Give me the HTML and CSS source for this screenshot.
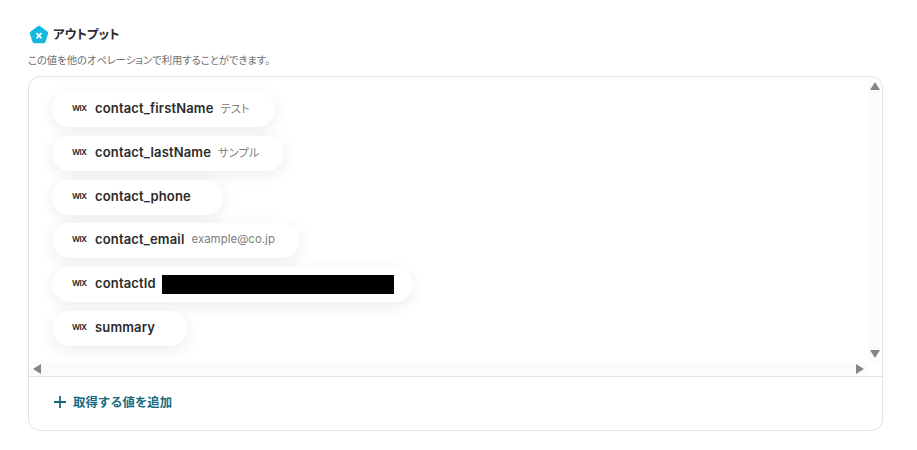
FILE: index.html
```html
<!DOCTYPE html>
<html lang="ja">
<head>
<meta charset="utf-8">
<title>アウトプット</title>
<link rel="stylesheet" href="styles.css">
</head>
<body>
<main class="page">
  <header class="heading">
    <svg class="badge" width="20" height="20" viewBox="0 0 20 20"><path d="M10 .8a2 2 0 0 1 1.200.4l7.200 5.200a2 2 0 0 1 .7 2.300l-2.700 8.200a2 2 0 0 1-1.900 1.400H5.500a2 2 0 0 1-1.900-1.400L.9 8.700a2 2 0 0 1 .7-2.300l7.200-5.200A2 2 0 0 1 10 .8z" fill="#14b8e0"/><path d="M7.500 8.200l5 5.200M12.500 8.200l-5 5.200" stroke="#fff" stroke-width="1.700" fill="none"/></svg>
    <h1 class="title">アウトプット</h1>
  </header>
  <p class="desc">この値を他のオペレーションで利用することができます。</p>
  <section class="card">
    <div class="scroller">
      <div class="list">
        <div class="pill"><span class="wix">WIX</span><span class="name">contact_firstName</span><span class="val jp">テスト</span></div>
        <div class="pill"><span class="wix">WIX</span><span class="name">contact_lastName</span><span class="val jp">サンプル</span></div>
        <div class="pill"><span class="wix">WIX</span><span class="name">contact_phone</span><span class="val"></span></div>
        <div class="pill"><span class="wix">WIX</span><span class="name">contact_email</span><span class="val">example@co.jp</span></div>
        <div class="pill"><span class="wix">WIX</span><span class="name">contactId</span><span class="redact"></span></div>
        <div class="pill"><span class="wix">WIX</span><span class="name">summary</span><span class="val"></span></div>
      </div>
      <div class="vbar">
        <svg width="10" height="8" viewBox="0 0 10 8"><path d="M5 0l5 8H0z" fill="#858585"/></svg>
        <svg width="10" height="8" viewBox="0 0 10 8"><path d="M0 0h10L5 8z" fill="#858585"/></svg>
      </div>
      <div class="hbar">
        <svg width="8" height="10" viewBox="0 0 8 10"><path d="M8 0v10L0 5z" fill="#858585"/></svg>
        <svg width="8" height="10" viewBox="0 0 8 10"><path d="M0 0l8 5-8 5z" fill="#858585"/></svg>
      </div>
    </div>
    <footer class="foot">
      <svg width="12" height="12" viewBox="0 0 12 12"><path d="M6 0v12M0 6h12" stroke="#176b80" stroke-width="1.800"/></svg>
      <span class="add">取得する値を追加</span>
    </footer>
  </section>
</main>
</body>
</html>
```
FILE: styles.css
```css
* { box-sizing: border-box; }
html, body { margin: 0; padding: 0; background: #fff; }
body { width: 917px; height: 450px; overflow: hidden; font-family: "Inter", "Noto Sans CJK JP", sans-serif; color: #2b2b2b; }
.page { padding: 25px 34px 0 28px; }
.heading { display: flex; align-items: center; gap: 4px; height: 20px; margin-left: 1px; }
.badge { flex: none; }
.title { margin: -2px 0 0; font-size: 12.500px; font-weight: 600; line-height: 20px; font-feature-settings: "palt"; color: #2b2b2b; font-family: "Noto Sans CJK JP", sans-serif; }
.desc { margin: 7px 0 0; font-size: 10.300px; line-height: 15px; font-feature-settings: "palt"; color: #6f6f6f; font-family: "Noto Sans CJK JP", sans-serif; }
.card { margin-top: 9px; height: 355px; border: 1px solid #e3e3e3; border-radius: 12px; overflow: hidden; display: flex; flex-direction: column; }
.scroller { height: 300px; flex: none; display: grid; grid-template-columns: 1fr 14px; grid-template-rows: 1fr 14px; border-bottom: 1px solid #e3e3e3; }
.list { padding: 15px 0 0 23px; display: flex; flex-direction: column; align-items: flex-start; gap: 8.800px; overflow: hidden; }
.pill { height: 35px; flex: none; display: flex; align-items: center; padding: 0 19px 3px; background: #fff; border-radius: 18px; box-shadow: 0 4px 16px rgba(0, 0, 0, .08); }
.wix { width: 24px; flex: none; padding-left: 1px; font-size: 8px; font-weight: 600; letter-spacing: -.6px; color: #222; }
.name { font-size: 13px; font-weight: 600; letter-spacing: .15px; color: #2b2b2b; white-space: nowrap; }
.val { margin: 0 6px 0 7px; font-size: 11.500px; color: #808080; white-space: nowrap; }
.jp { font-size: 11.300px; font-feature-settings: "palt"; }
.redact { margin: 3px 0 0 6px; width: 232px; height: 19px; background: #000; }
.vbar { background: #fbfbfb; display: flex; flex-direction: column; justify-content: space-between; align-items: center; padding: 5px 0 4px; }
.hbar { background: #fbfbfb; display: flex; justify-content: space-between; align-items: center; padding: 0 4px; }
.foot { flex: 1; display: flex; align-items: center; gap: 7px; padding: 0 0 4px 25px; }
.add { font-size: 12.400px; font-weight: 600; color: #176b80; font-family: "Noto Sans CJK JP", sans-serif; }
```
